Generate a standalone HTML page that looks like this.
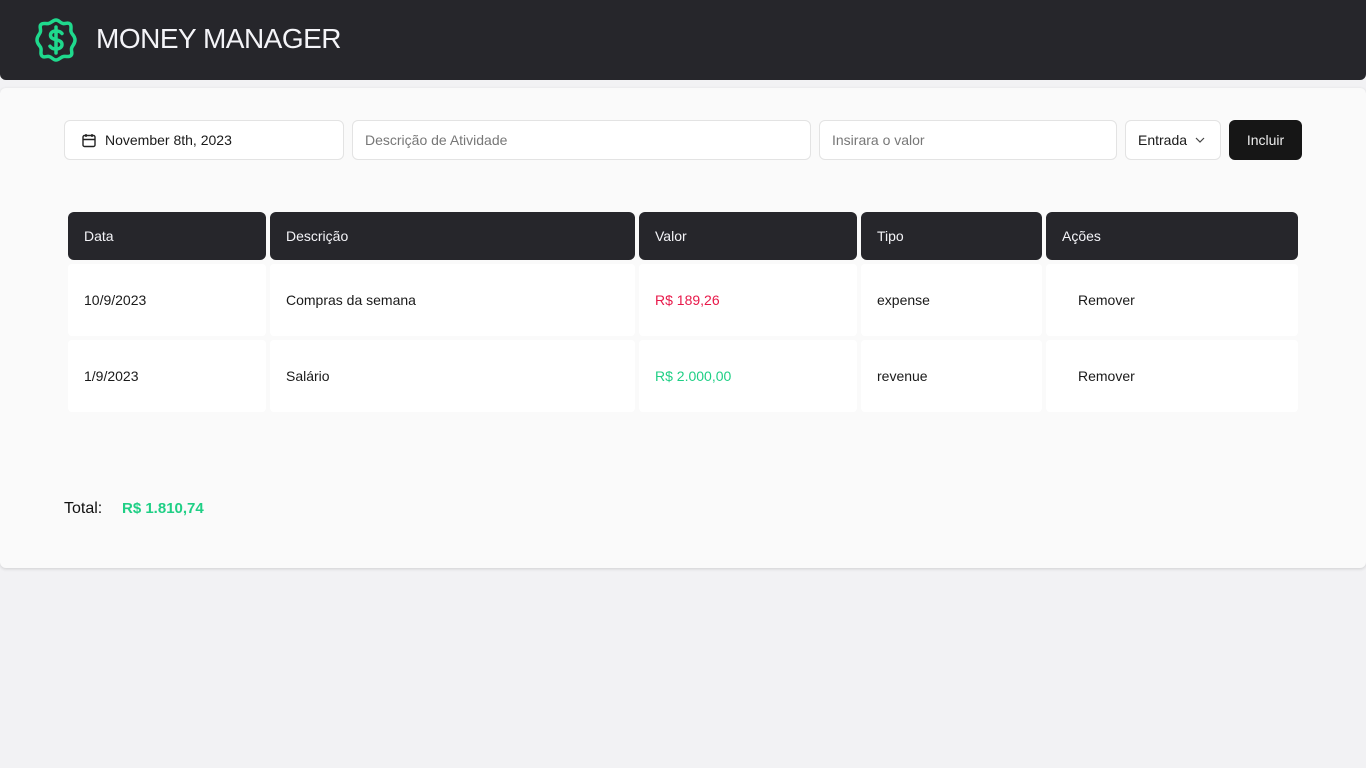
<!DOCTYPE html>
<html><head><meta charset="utf-8"><style>
*{box-sizing:border-box;margin:0;padding:0}
body{width:1366px;height:768px;background:#f2f2f4;font-family:"Liberation Sans",sans-serif;position:relative;overflow:hidden;color:#1a1a1a}
.hdr{position:absolute;left:0;top:0;width:1366px;height:80px;background:#26262b;border-radius:0 0 6px 6px}
.hdr h1{position:absolute;left:96px;top:23px;font-size:28px;font-weight:400;color:#f4f4f8;letter-spacing:-0.5px}
.logo{position:absolute;left:33px;top:17px}
.card{position:absolute;left:0;top:88px;width:1366px;height:480px;background:#fafafa;border-radius:6px;box-shadow:0 1px 3px rgba(0,0,0,.15)}
.in{position:absolute;top:120px;height:40px;background:#fff;border:1px solid #e3e3e3;border-radius:6px;font-size:14px;line-height:38px;padding-left:12px}
.ph{color:#777}
.btn{position:absolute;left:1229px;top:120px;width:73px;height:40px;background:#161616;color:#eee;border-radius:6px;font-size:14px;line-height:40px;text-align:center}
.c{position:absolute;font-size:14px;padding-left:16px}
.h{background:#26262b;color:#f4f4f8;height:48px;line-height:48px;border-radius:6px;top:212px}
.r{background:#fff;height:72px;line-height:72px;border-radius:4px}
</style></head><body>
<div class="hdr">
<svg class="logo" width="46" height="46" viewBox="0 0 46 46" fill="none" stroke="#1fd98d" stroke-width="3.5" stroke-linejoin="round" stroke-linecap="round">
<path d="M23 3c3 0 4 3 7 3.5s5-1.5 7 0.5 0.5 4.5 1 7.5 4 4 4 8.5-3 5.5-3.5 8.5 1.5 5-0.5 7-4.5 0.5-7.5 1S26 43 23 43s-4-3-7-3.5-5 1.5-7-0.5-0.5-4.5-1-7.5S4 27.5 4 23s3-5.5 3.5-8.5S6 9.5 8 7.5s4.5-0.5 7.5-1S20 3 23 3z"/>
<path d="M29 16.5c-1-1.5-3-2.5-6-2.5-3.5 0-5.5 1.8-5.5 4.2 0 5.8 11.5 3.2 11.5 9.3 0 2.5-2.2 4.5-6 4.5-3 0-5-1.2-6-2.8M23 10v26"/>
</svg>
<h1>MONEY MANAGER</h1>
</div>
<div class="card"></div>
<div class="in" style="left:64px;width:280px;padding-left:40px">November 8th, 2023
<svg style="position:absolute;left:17px;top:12px" width="14" height="15" viewBox="0 0 14 15" fill="none" stroke="#222" stroke-width="1.4"><rect x="1" y="2.5" width="12" height="11" rx="1.5"/><path d="M1 6.5h12M4 1v3M10 1v3"/></svg></div>
<div class="in ph" style="left:352px;width:459px">Descrição de Atividade</div>
<div class="in ph" style="left:819px;width:298px">Insirara o valor</div>
<div class="in" style="left:1125px;width:96px">Entrada<svg style="position:absolute;left:69px;top:15px" width="10" height="8" viewBox="0 0 10 8" fill="none" stroke="#444" stroke-width="1.2"><path d="M1 2l4 4 4-4"/></svg></div>
<div class="btn">Incluir</div>

<div class="c h" style="left:68px;width:198px">Data</div>
<div class="c h" style="left:270px;width:365px">Descrição</div>
<div class="c h" style="left:639px;width:218px">Valor</div>
<div class="c h" style="left:861px;width:181px">Tipo</div>
<div class="c h" style="left:1046px;width:252px">Ações</div>

<div class="c r" style="left:68px;width:198px;top:264px">10/9/2023</div>
<div class="c r" style="left:270px;width:365px;top:264px">Compras da semana</div>
<div class="c r" style="left:639px;width:218px;top:264px;color:#e8194a">R$ 189,26</div>
<div class="c r" style="left:861px;width:181px;top:264px">expense</div>
<div class="c r" style="left:1046px;width:252px;top:264px;padding-left:32px">Remover</div>

<div class="c r" style="left:68px;width:198px;top:340px">1/9/2023</div>
<div class="c r" style="left:270px;width:365px;top:340px">Salário</div>
<div class="c r" style="left:639px;width:218px;top:340px;color:#1fcf85">R$ 2.000,00</div>
<div class="c r" style="left:861px;width:181px;top:340px">revenue</div>
<div class="c r" style="left:1046px;width:252px;top:340px;padding-left:32px">Remover</div>

<div style="position:absolute;left:64px;top:500px;font-size:16px;color:#111">Total:</div>
<div style="position:absolute;left:122px;top:500px;font-size:15px;color:#1fcf85;font-weight:bold">R$ 1.810,74</div>
</body></html>
